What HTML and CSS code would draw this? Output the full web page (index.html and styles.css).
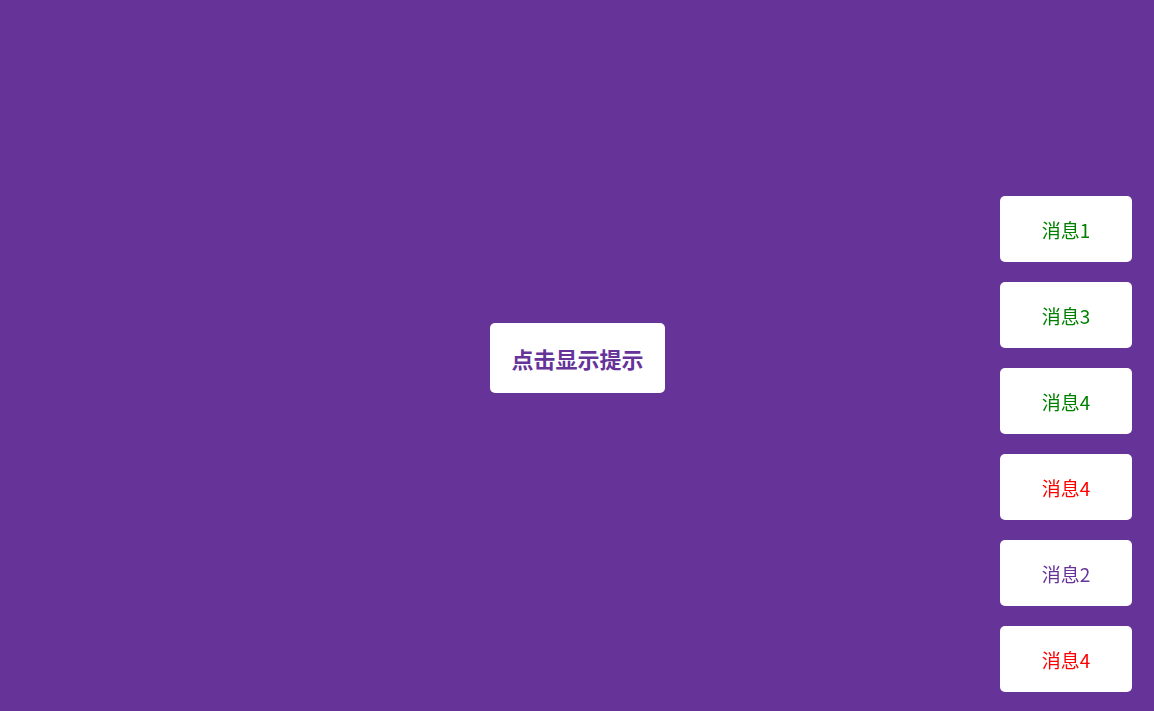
FILE: index.html
```html
<!DOCTYPE html>
<html lang="zh">
<head>
<meta charset="utf-8">
<link rel="stylesheet" href="styles.css">
</head>
<body>
<main class="stage">
  <button class="show-btn">点击显示提示</button>
</main>
<div class="toasts">
  <div class="toast green">消息1</div>
  <div class="toast green">消息3</div>
  <div class="toast green">消息4</div>
  <div class="toast red">消息4</div>
  <div class="toast purple">消息2</div>
  <div class="toast red">消息4</div>
</div>
</body>
</html>
```
FILE: styles.css
```css
html, body {
  margin: 0;
  padding: 0;
  height: 100%;
}
body {
  background: #663399;
  font-family: "Noto Sans CJK SC", "Noto Sans", sans-serif;
  overflow: hidden;
}
.stage {
  height: 100%;
  display: flex;
  align-items: center;
  justify-content: center;
  padding-left: 1px;
  box-sizing: border-box;
}
.show-btn {
  width: 175px;
  height: 70px;
  padding: 0;
  background: #fff;
  border: none;
  border-radius: 5px;
  color: #663399;
  font-family: "Noto Sans CJK SC", sans-serif;
  font-size: 22px;
  font-weight: 700;
  cursor: pointer;
  margin-top: 5px;
}
.toasts {
  position: fixed;
  right: 22px;
  bottom: 19px;
  display: flex;
  flex-direction: column;
  gap: 20px;
}
.toast {
  width: 132px;
  height: 66px;
  background: #fff;
  border-radius: 5px;
  display: flex;
  align-items: center;
  justify-content: center;
  font-size: 19px;
  padding-top: 1px;
  box-sizing: border-box;
}
.green { color: #008000; }
.red { color: #ff0000; }
.purple { color: #663399; }
```
